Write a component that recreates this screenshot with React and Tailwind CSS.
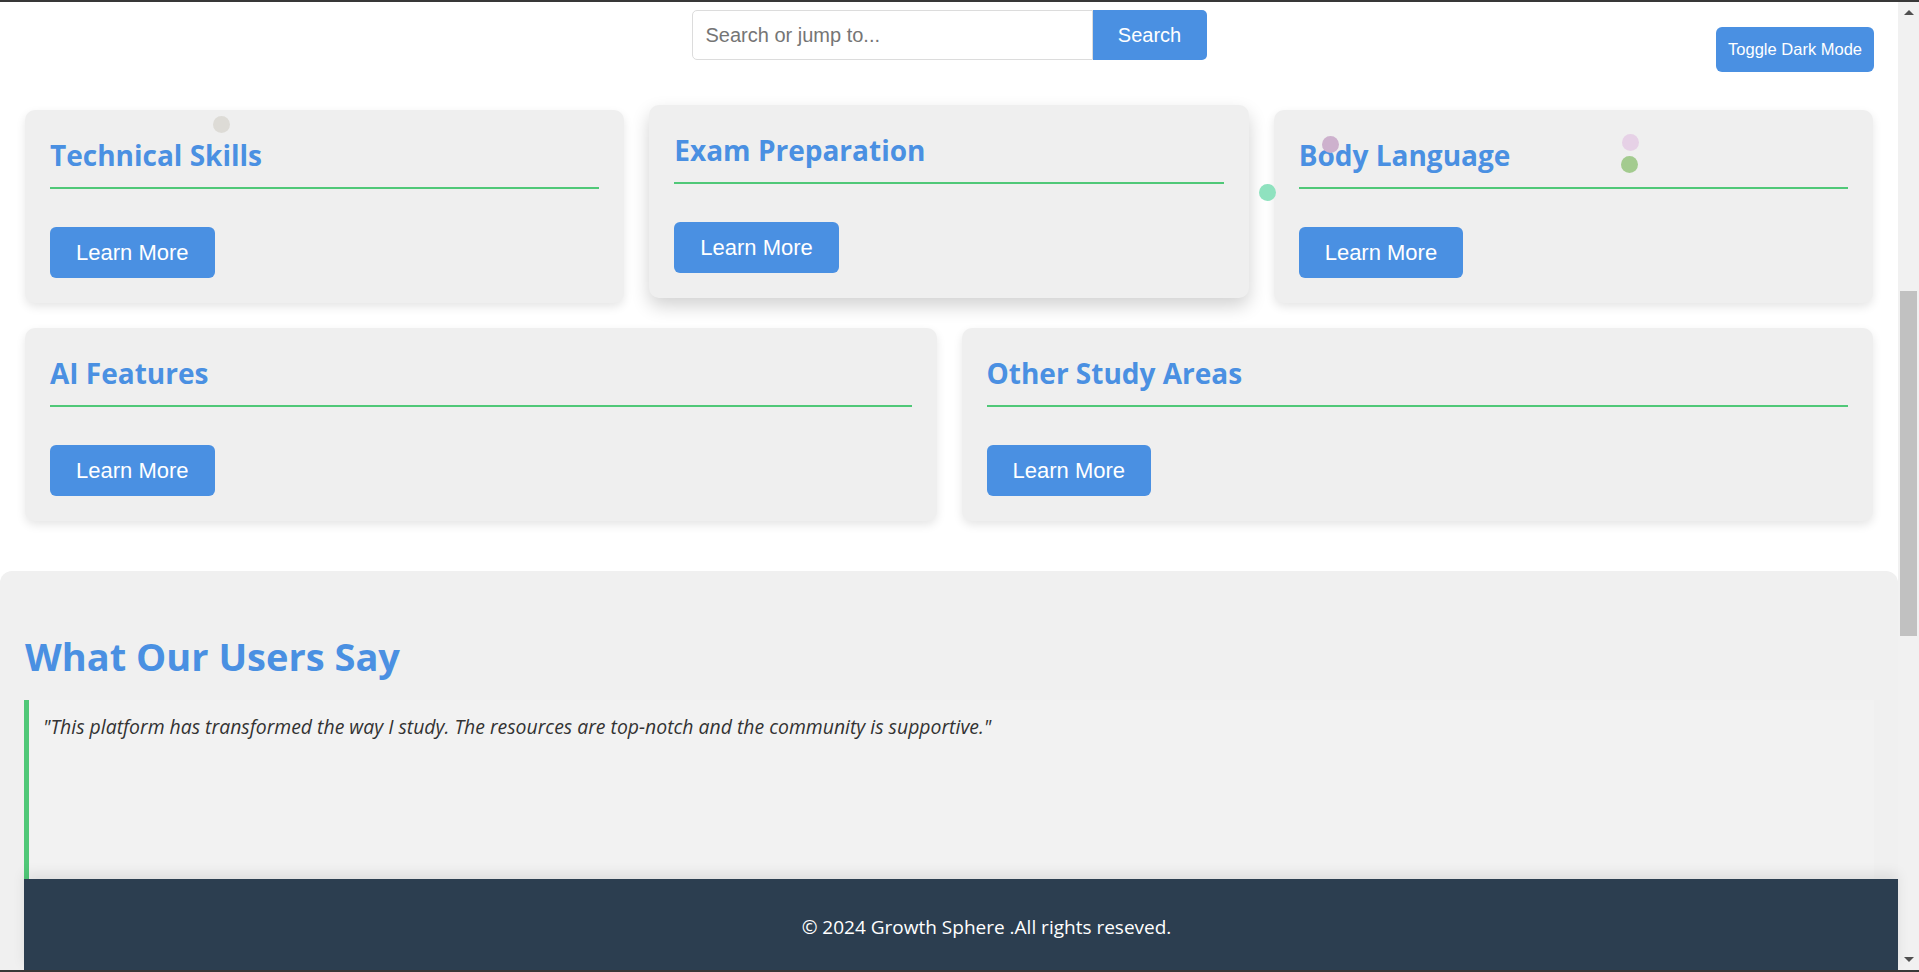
import React from "react";

const cards = [
  { title: "Technical Skills" },
  { title: "Exam Preparation", hovered: true },
  { title: "Body Language" },
];

const cards2 = [{ title: "AI Features" }, { title: "Other Study Areas" }];

// floating particles over the page
const dots = [
  { left: "left-[213px]", top: "top-[114px]", color: "bg-[#dddbd6]" },
  { left: "left-[1322px]", top: "top-[134px]", color: "bg-[#cdb1cd]" },
  { left: "left-[1622px]", top: "top-[132px]", color: "bg-[#e6d1e6]" },
  { left: "left-[1621px]", top: "top-[154px]", color: "bg-[#a3cb8f]" },
  { left: "left-[1259px]", top: "top-[182px]", color: "bg-[#8fe2bf]" },
];

function Card({ title, hovered }) {
  return (
    <div
      className={
        hovered
          ? "bg-[#efefef] rounded-[10px] p-[25px] -translate-y-[5px] shadow-[0_8px_18px_rgba(0,0,0,0.18)]"
          : "bg-[#efefef] rounded-[10px] p-[25px] shadow-[0_4px_10px_rgba(0,0,0,0.1)]"
      }
    >
      <h3 className="font-['Open_Sans',sans-serif] font-bold text-[28px] leading-[40px] text-[#4a90e2] pb-[12px] border-b-2 border-[#50c878]">
        {title}
      </h3>
      <button className="mt-[38px] h-[51px] px-[26px] rounded-[6px] bg-[#4a90e2] text-white text-[22px] font-['Liberation_Sans',Arial,sans-serif]">
        Learn More
      </button>
    </div>
  );
}

export default function App() {
  return (
    <div className="h-[972px] w-full flex flex-col overflow-hidden bg-white">
      <div className="h-[2px] bg-[#383838]" />
      <div className="flex flex-1 min-h-0">
        <div className="relative flex-1 flex flex-col min-w-0">
          {/* HEADER */}
          <div className="grid grid-cols-[1fr_auto_1fr] items-start h-[70px]">
            <div />
            <div className="flex mt-[8px]">
              <input
                type="text"
                placeholder="Search or jump to..."
                className="w-[401px] h-[50px] border border-[#dcdcdc] rounded-l-[5px] px-[13px] text-[20px] text-[#333] placeholder:text-[#757575] font-['Liberation_Sans',Arial,sans-serif] outline-none"
              />
              <button className="w-[114px] h-[50px] bg-[#4a90e2] text-white text-[20px] rounded-r-[5px] font-['Liberation_Sans',Arial,sans-serif]">
                Search
              </button>
            </div>
            <div className="flex justify-end pr-[24px]">
              <button className="mt-[25px] h-[45px] px-[12px] rounded-[6px] bg-[#4a90e2] text-white text-[16.5px] font-['Liberation_Sans',Arial,sans-serif]">
                Toggle Dark Mode
              </button>
            </div>
          </div>

          {/* CARDS */}
          <div className="pt-[38px] px-[25px]">
            <div className="grid grid-cols-3 gap-[25px]">
              {cards.map((c) => (
                <Card key={c.title} {...c} />
              ))}
            </div>
            <div className="grid grid-cols-2 gap-[25px] mt-[25px]">
              {cards2.map((c) => (
                <Card key={c.title} {...c} />
              ))}
            </div>
          </div>

          {/* TESTIMONIALS */}
          <div className="mt-[50px] flex-1 min-h-0 flex flex-col bg-[#f0f0f0] rounded-t-[12px] pt-[60px]">
            <h2 className="px-[25px] font-['Open_Sans',sans-serif] font-bold text-[38px] leading-[50px] text-[#4a90e2]">
              What Our Users Say
            </h2>
            <blockquote className="mt-[19px] mx-[24px] flex-1 border-l-[5px] border-[#50c878] bg-[#f2f2f2] pl-[14px] pt-[12px]">
              <p className="font-['Open_Sans',sans-serif] italic text-[19.4px] leading-[30px] text-[#333]">
                "This platform has transformed the way I study. The resources are top-notch and the community is supportive."
              </p>
            </blockquote>
            <footer className="ml-[24px] h-[91px] bg-[#2c3e50] flex items-center justify-center pl-[51px] pt-[6px] shadow-[0_-6px_12px_rgba(0,0,0,0.08)]">
              <p className="font-['Open_Sans',sans-serif] text-[19px] text-white">
                © 2024 Growth Sphere .All rights reseved.
              </p>
            </footer>
          </div>

          {dots.map((d, i) => (
            <span
              key={i}
              className={`absolute w-[17px] h-[17px] rounded-full ${d.left} ${d.top} ${d.color}`}
            />
          ))}
        </div>

        {/* SCROLLBAR */}
        <div className="w-[21px] bg-[#f1f1f1] flex flex-col items-center">
          <div className="h-[21px] flex items-center justify-center">
            <span className="w-0 h-0 border-l-[5px] border-r-[5px] border-b-[5px] border-l-transparent border-r-transparent border-b-[#505050]" />
          </div>
          <div className="mt-[268px] w-[17px] h-[345px] bg-[#c1c1c1]" />
          <div className="flex-1" />
          <div className="h-[21px] flex items-center justify-center">
            <span className="w-0 h-0 border-l-[5px] border-r-[5px] border-t-[5px] border-l-transparent border-r-transparent border-t-[#505050]" />
          </div>
        </div>
      </div>
      <div className="h-[2px] bg-[#383838]" />
    </div>
  );
}
